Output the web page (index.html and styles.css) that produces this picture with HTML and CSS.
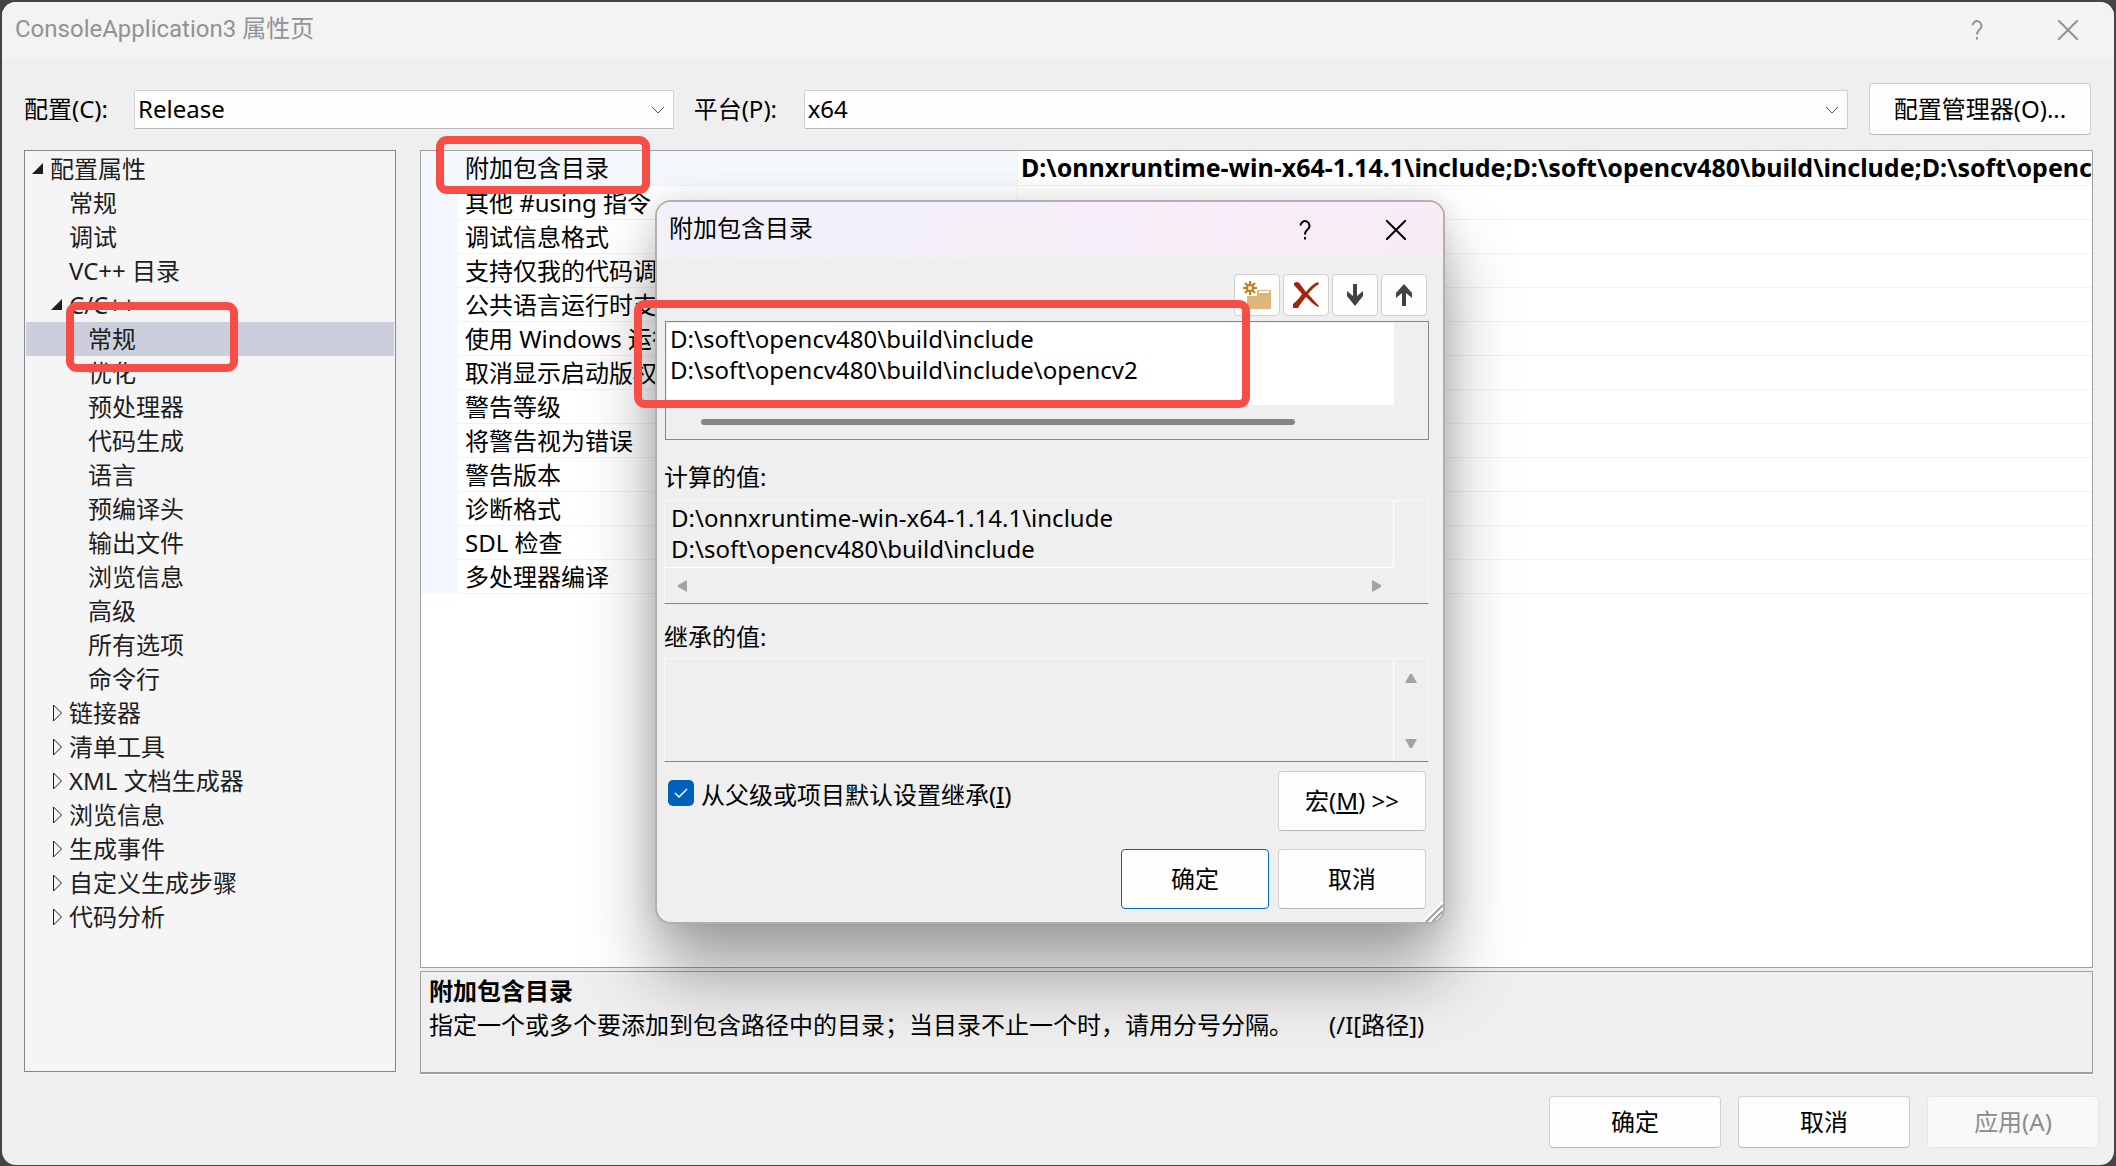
FILE: index.html
```
<!DOCTYPE html>
<html lang="zh-CN">
<head>
    <meta charset="UTF-8">
    <meta name="viewport" content="width=device-width, initial-scale=1.0">
    <title>ConsoleApplication3 属性页</title>
    <link rel="stylesheet" href="styles.css">
</head>
<body>
    <div class="window">
        <header class="titlebar">
            <h1>ConsoleApplication3 属性页</h1>
            <button class="caption-btn" aria-label="帮助"><svg width="12" height="20" viewBox="0 0 12 20"><path d="M1.500 5.500a4.500 4.500 0 1 1 7.500 3.500c-2 1.600-3 2.500-3 5.500M6 17v2.500"/></svg></button>
            <button class="caption-btn" aria-label="关闭"><svg width="20" height="20" viewBox="0 0 20 20"><path d="M0 0L20 20M20 0L0 20"/></svg></button>
        </header>

        <div class="config-row">
            <label for="config">配置(C):</label>
            <span class="combo combo-config">
                <select id="config"><option>Release</option><option>Debug</option></select>
                <svg width="14" height="8" viewBox="0 0 14 8"><path d="M1 1L7 7L13 1"/></svg>
            </span>
            <label for="platform">平台(P):</label>
            <span class="combo combo-platform">
                <select id="platform"><option>x64</option><option>Win32</option></select>
                <svg width="14" height="8" viewBox="0 0 14 8"><path d="M1 1L7 7L13 1"/></svg>
            </span>
            <button class="btn manager">配置管理器(O)...</button>
        </div>

        <main>
            <ul class="tree" role="tree">
                <li class="open">配置属性</li>
                <li class="level1">常规</li>
                <li class="level1">调试</li>
                <li class="level1">VC++ 目录</li>
                <li class="level1 open">C/C++</li>
                <li class="level2 selected">常规</li>
                <li class="level2">优化</li>
                <li class="level2">预处理器</li>
                <li class="level2">代码生成</li>
                <li class="level2">语言</li>
                <li class="level2">预编译头</li>
                <li class="level2">输出文件</li>
                <li class="level2">浏览信息</li>
                <li class="level2">高级</li>
                <li class="level2">所有选项</li>
                <li class="level2">命令行</li>
                <li class="level1 closed">链接器</li>
                <li class="level1 closed">清单工具</li>
                <li class="level1 closed">XML 文档生成器</li>
                <li class="level1 closed">浏览信息</li>
                <li class="level1 closed">生成事件</li>
                <li class="level1 closed">自定义生成步骤</li>
                <li class="level1 closed">代码分析</li>
            </ul>

            <div class="right">
                <div class="grid">
                    <table>
                        <tr class="current"><th>附加包含目录</th><td>D:\onnxruntime-win-x64-1.14.1\include;D:\soft\opencv480\build\include;D:\soft\openc</td></tr>
                        <tr><th>其他 #using 指令</th><td></td></tr>
                        <tr><th>调试信息格式</th><td></td></tr>
                        <tr><th>支持仅我的代码调试</th><td></td></tr>
                        <tr><th>公共语言运行时支持</th><td></td></tr>
                        <tr><th>使用 Windows 运行时扩展</th><td></td></tr>
                        <tr><th>取消显示启动版权标志</th><td></td></tr>
                        <tr><th>警告等级</th><td></td></tr>
                        <tr><th>将警告视为错误</th><td></td></tr>
                        <tr><th>警告版本</th><td></td></tr>
                        <tr><th>诊断格式</th><td></td></tr>
                        <tr><th>SDL 检查</th><td></td></tr>
                        <tr><th>多处理器编译</th><td></td></tr>
                    </table>
                </div>
                <div class="description">
                    <h2>附加包含目录</h2>
                    <p>指定一个或多个要添加到包含路径中的目录；当目录不止一个时，请用分号分隔。<span class="switch">(/I[路径])</span></p>
                </div>
            </div>
        </main>

        <footer>
            <button class="btn">确定</button>
            <button class="btn">取消</button>
            <button class="btn" disabled>应用(A)</button>
        </footer>
    </div>

    <div class="dialog" role="dialog" aria-labelledby="dialogTitle">
        <header class="titlebar">
            <h2 id="dialogTitle">附加包含目录</h2>
            <button class="caption-btn" aria-label="帮助"><svg width="12" height="20" viewBox="0 0 12 20"><path d="M1.500 5.500a4.500 4.500 0 1 1 7.500 3.500c-2 1.600-3 2.500-3 5.500M6 17v2.500"/></svg></button>
            <button class="caption-btn" aria-label="关闭"><svg width="20" height="20" viewBox="0 0 20 20"><path d="M0 0L20 20M20 0L0 20"/></svg></button>
        </header>

        <div class="dialog-body">
            <div class="toolbar">
                <button aria-label="新行">
                    <svg width="30" height="30" viewBox="0 0 30 30">
                        <path fill="#dcb67a" d="M5 16h6l5-6h13v19H5z"/>
                        <path fill="#fdfdfd" d="M17 11h10v2H17zM0 0h15v16H5v-2H0z"/>
                        <path stroke="#c27d1a" stroke-width="2" fill="none" d="M8 1v4M8 11v4M1 8h4M11 8h4M3 3l3 3M13 3l-3 3M3 13l3-3M13 13l-3-3"/>
                        <circle cx="8" cy="8" r="3" fill="none" stroke="#c27d1a" stroke-width="2"/>
                    </svg>
                </button>
                <button aria-label="删除">
                    <svg width="30" height="30" viewBox="0 0 30 30">
                        <path fill="#a1260d" d="M3 3c3-2 5-1 6 1l6 8C18 8 22 4 27 2l1 2c-5 3-8 6-11 10 4 4 7 8 11 12l-1 1c-5-3-8-6-12-10-3 4-6 7-8 11H2v-4c4-3 7-7 9-10L3 5z"/>
                    </svg>
                </button>
                <button aria-label="下移">
                    <svg width="22" height="24" viewBox="0 0 22 24"><path fill="#424242" d="M9 1h4v12l6-5v5l-8 10-8-10V8l6 5z"/></svg>
                </button>
                <button aria-label="上移">
                    <svg width="22" height="24" viewBox="0 0 22 24"><path fill="#424242" d="M9 23h4V10l6 5v-5L11 1l-8 9v5l6-5z"/></svg>
                </button>
            </div>

            <div class="list">
                <textarea aria-label="附加包含目录" wrap="off">D:\soft\opencv480\build\include
D:\soft\opencv480\build\include\opencv2</textarea>
                <div class="thumb"></div>
            </div>

            <label class="caption" for="evaluated">计算的值:</label>
            <div class="readonly-box">
                <div class="readonly-view">
                    <textarea id="evaluated" readonly wrap="off">D:\onnxruntime-win-x64-1.14.1\include
D:\soft\opencv480\build\include</textarea>
                    <div class="hscroll">
                        <svg width="9" height="12" viewBox="0 0 9 12"><path d="M9 0v12L0 7V5z"/></svg>
                        <svg width="9" height="12" viewBox="0 0 9 12"><path d="M0 0v12l9-5V5z"/></svg>
                    </div>
                </div>
                <div class="vscroll"></div>
            </div>

            <label class="caption" for="inherited">继承的值:</label>
            <div class="readonly-box">
                <div class="readonly-view ruled">
                    <textarea id="inherited" readonly></textarea>
                </div>
                <div class="vscroll">
                    <svg width="12" height="9" viewBox="0 0 12 9"><path d="M0 9h12L7 0H5z"/></svg>
                    <svg width="12" height="9" viewBox="0 0 12 9"><path d="M0 0h12L7 9H5z"/></svg>
                </div>
            </div>

            <div class="inherit-row">
                <input type="checkbox" id="inherit" checked>
                <label for="inherit">从父级或项目默认设置继承(<u>I</u>)</label>
                <button class="btn">宏(<u>M</u>) &gt;&gt;</button>
            </div>
            <div class="dialog-buttons">
                <button class="btn default">确定</button>
                <button class="btn">取消</button>
            </div>
        </div>
        <svg class="grip" width="20" height="20" viewBox="0 0 20 20">
            <path stroke="#fff" d="M0 20L20 0M6 20L20 6M12 20L20 12"/>
            <path stroke="#a0a0a0" d="M3 20L20 3M9 20L20 9"/>
        </svg>
    </div>

    <div class="mark mark-property"></div>
    <div class="mark mark-tree"></div>
    <div class="mark mark-list"></div>
</body>
</html>
```
FILE: styles.css
```
* {
    box-sizing: border-box;
}

body {
    margin: 0;
    height: 100vh;
    padding: 2px 2px 1px;
    background: #444;
    font-family: "Noto Sans", "Noto Sans CJK SC", sans-serif;
    font-size: 24px;
    line-height: 34px;
    color: #000;
    position: relative;
    overflow: hidden;
}

h1, h2, p, ul {
    margin: 0;
    padding: 0;
}

button, select, textarea {
    font: inherit;
    color: inherit;
}

.window {
    height: 100%;
    display: flex;
    flex-direction: column;
    background: #efefef;
    border-radius: 14px;
    overflow: hidden;
}

.titlebar {
    display: flex;
    align-items: center;
    height: 56px;
}

.window .titlebar {
    padding: 0 36px 0 13px;
    background: #f3f3f3;
    color: #929292;
}

.titlebar h1, .titlebar h2 {
    flex: 1;
    padding-bottom: 2px;
    font-family: Roboto, "Noto Sans CJK SC", sans-serif;
    font-size: 24px;
    font-weight: normal;
}

.caption-btn {
    display: flex;
    justify-content: center;
    width: 20px;
    padding: 0;
    border: none;
    background: none;
    margin-left: 71px;
}

.caption-btn svg {
    fill: none;
    stroke: currentColor;
    stroke-width: 2;
}

/* 配置 / 平台 */
.config-row {
    display: flex;
    align-items: center;
    margin: 25px 23px 15px 22px;
}

.config-row label {
    width: 110px;
}

.combo {
    position: relative;
    height: 39px;
}

.combo-config {
    flex: 540;
    margin-right: 20px;
}

.combo-platform {
    flex: 1045;
    margin-right: 21px;
}

.combo select {
    appearance: none;
    width: 100%;
    height: 39px;
    padding: 0 3px;
    border: 1px solid #d0d0d0;
    border-bottom-color: #b8b8b8;
    border-radius: 2px;
    background: #fdfdfd;
}

.combo svg {
    position: absolute;
    right: 9px;
    top: 16px;
    fill: none;
    stroke: #555;
    pointer-events: none;
}

.btn {
    min-width: 172px;
    height: 52px;
    padding: 0 20px;
    border: 1px solid #d0d0d0;
    border-bottom-color: #b8b8b8;
    border-radius: 4px;
    background: #fdfdfd;
}

.btn:disabled {
    color: #8c8c8c;
    border-color: #e6e6e6;
    background: #f8f8f8;
}

.manager {
    width: 222px;
    white-space: nowrap;
}

main {
    flex: 1;
    display: flex;
    gap: 24px;
    min-height: 0;
    margin: 0 21px 0 22px;
}

/* 左侧树 */
.tree {
    width: 372px;
    margin-bottom: 2px;
    padding: 1px;
    list-style: none;
    border: 1px solid #828790;
    background: #f5f5f5;
    color: #1e1e1e;
}

.tree li {
    position: relative;
    height: 34px;
    padding-left: 24px;
}

.tree .level1 {
    padding-left: 43px;
}

.tree .level2 {
    padding-left: 62px;
}

.tree .selected {
    background: #cccedb;
}

.tree .open::before, .tree .closed::before {
    content: "";
    position: absolute;
    left: 6px;
    top: 11px;
    width: 11px;
    height: 11px;
    background: #1e1e1e;
    clip-path: polygon(100% 0, 100% 100%, 0 100%);
}

.tree .level1.open::before {
    left: 25px;
}

.tree .closed::before {
    left: 27px;
    top: 8px;
    width: 10px;
    height: 18px;
    background: url("data:image/svg+xml,%3Csvg xmlns='http://www.w3.org/2000/svg' viewBox='0 0 10 18'%3E%3Cpath d='M.5 1v16l8-8z' fill='none' stroke='%231e1e1e'/%3E%3C/svg%3E");
    clip-path: none;
}

/* 属性表 */
.right {
    flex: 1;
    min-width: 0;
    display: flex;
    flex-direction: column;
    gap: 3px;
}

.grid {
    flex: 1;
    border: 1px solid #a0a0a0;
    background: #fff;
}

.grid table {
    width: 100%;
    table-layout: fixed;
    border-collapse: collapse;
}

.grid th, .grid td {
    height: 34px;
    padding: 0;
    border-bottom: 1px solid #f0f2f5;
    line-height: 33px;
    text-align: left;
    white-space: nowrap;
    overflow: hidden;
}

.grid th {
    width: 578px;
    padding-left: 7px;
    border-left: 37px solid #f4f7fc;
    border-right: 1px solid #f0f2f5;
    font-weight: normal;
}

.grid td {
    padding-left: 3px;
    font-size: 25px;
    font-weight: bold;
}

.grid .current th {
    background: #f4f7fc;
}

.description {
    height: 103px;
    padding: 2px 8px;
    border: 1px solid #a0a0a0;
    border-bottom-width: 2px;
    box-shadow: 0 1px 0 #fff;
}

.description h2 {
    font-size: 24px;
}

.switch {
    margin-left: 36px;
}

footer {
    display: flex;
    justify-content: flex-end;
    gap: 17px;
    padding: 22px 15px 17px;
}

/* 附加包含目录 */
.dialog {
    position: absolute;
    left: 655px;
    top: 200px;
    width: 790px;
    border: 2px solid #b0b0b0;
    border-radius: 16px;
    background: #efefef;
    box-shadow: 0 50px 70px rgba(0, 0, 0, 0.36), 0 0 30px rgba(0, 0, 0, 0.12);
    overflow: hidden;
}

.dialog .titlebar {
    padding: 0 37px 0 12px;
    background: linear-gradient(100deg, #f1f1f9, #f9ebf6);
}

.dialog-body {
    padding: 16px 14px 13px 7px;
}

.toolbar {
    display: flex;
    justify-content: flex-end;
    gap: 3px;
    margin: 0 2px 5px 0;
}

.toolbar button {
    display: flex;
    align-items: center;
    justify-content: center;
    width: 46px;
    height: 42px;
    padding: 0;
    border: 1px solid #d0d0d0;
    border-radius: 4px;
    background: #fdfdfd;
}

.dialog textarea {
    display: block;
    width: 100%;
    border: none;
    outline: none;
    resize: none;
    overflow: hidden;
    line-height: 31px;
}

.list {
    height: 119px;
    margin-left: 1px;
    padding: 1px 34px 1px 1px;
    border: 1px solid #828790;
}

.list textarea {
    height: 82px;
    padding: 0 3px;
    background: #fff;
}

.thumb {
    width: 594px;
    height: 6px;
    margin: 14px 0 0 34px;
    border-radius: 3px;
    background: #858585;
}

.caption {
    display: block;
    padding: 20px 0 6px;
}

.readonly-box + .caption {
    padding: 16px 0 4px;
}

.readonly-box {
    display: flex;
    height: 104px;
    border: 1px solid #f8f8f8;
    border-bottom-color: #858585;
}

.readonly-view {
    flex: 1;
}

.readonly-view textarea {
    height: 67px;
    padding: 1px 6px;
    border-right: 1px solid #fff;
    border-bottom: 1px solid #fff;
    background: none;
}

.readonly-view.ruled textarea {
    height: 102px;
    border-bottom: none;
}

.readonly-box svg {
    fill: #a3a3a3;
}

.hscroll {
    display: flex;
    justify-content: space-between;
    align-items: center;
    height: 35px;
    padding: 0 13px;
}

.vscroll {
    display: flex;
    flex-direction: column;
    justify-content: space-between;
    align-items: center;
    width: 34px;
    padding: 15px 0 13px;
}

.inherit-row {
    display: flex;
    align-items: flex-start;
    gap: 7px;
    padding: 9px 3px 0 4px;
}

.inherit-row input {
    appearance: none;
    width: 26px;
    height: 26px;
    margin: 9px 0 0;
    border-radius: 5px;
    background: #005fb8 url("data:image/svg+xml,%3Csvg xmlns='http://www.w3.org/2000/svg' viewBox='0 0 26 26'%3E%3Cpath d='M7 13l4 4 8-8' fill='none' stroke='white' stroke-width='1.500'/%3E%3C/svg%3E");
}

.inherit-row label {
    flex: 1;
    padding-top: 7px;
}

.dialog .btn {
    min-width: 148px;
    height: 60px;
}

.dialog-buttons {
    display: flex;
    justify-content: flex-end;
    gap: 9px;
    padding: 18px 3px 0 0;
}

.dialog .default {
    border-color: #0067c0;
}

.grip {
    position: absolute;
    right: 0;
    bottom: 0;
    fill: none;
    stroke-width: 2;
}

/* 红色标注框 */
.mark {
    position: absolute;
    border: 8px solid #f84d47;
    border-radius: 11px;
    pointer-events: none;
}

.mark-property {
    left: 436px;
    top: 136px;
    width: 214px;
    height: 58px;
}

.mark-tree {
    left: 66px;
    top: 302px;
    width: 172px;
    height: 70px;
}

.mark-list {
    left: 634px;
    top: 300px;
    width: 616px;
    height: 108px;
}
```
